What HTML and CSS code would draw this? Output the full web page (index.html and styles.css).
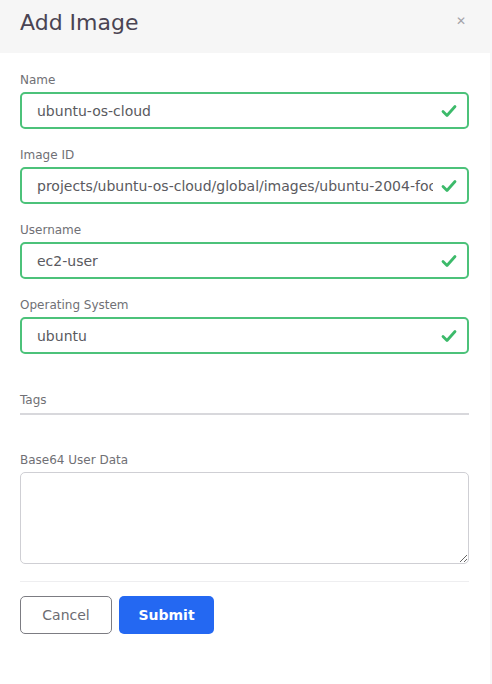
FILE: index.html
```html
<!DOCTYPE html>
<html>
<head>
<meta charset="utf-8">
<link rel="stylesheet" href="styles.css">
</head>
<body>
<div class="modal">
  <div class="header">
    <h1 class="title">Add Image</h1>
    <span class="close">&#x2715;</span>
  </div>
  <div class="body">
    <div class="field">
      <label class="label">Name</label>
      <div class="input valid"><span class="value">ubuntu-os-cloud</span><svg class="check" width="16" height="14" viewBox="0 0 16 14"><path d="M2 7.5 L6 11.5 L14 2.5" fill="none" stroke="#3cba6a" stroke-width="2.8" stroke-linecap="round" stroke-linejoin="round"/></svg></div>
    </div>
    <div class="field">
      <label class="label">Image ID</label>
      <div class="input valid"><span class="value">projects/ubuntu-os-cloud/global/images/ubuntu-2004-focal-v20210510</span><svg class="check" width="16" height="14" viewBox="0 0 16 14"><path d="M2 7.5 L6 11.5 L14 2.5" fill="none" stroke="#3cba6a" stroke-width="2.8" stroke-linecap="round" stroke-linejoin="round"/></svg></div>
    </div>
    <div class="field">
      <label class="label">Username</label>
      <div class="input valid"><span class="value">ec2-user</span><svg class="check" width="16" height="14" viewBox="0 0 16 14"><path d="M2 7.5 L6 11.5 L14 2.5" fill="none" stroke="#3cba6a" stroke-width="2.8" stroke-linecap="round" stroke-linejoin="round"/></svg></div>
    </div>
    <div class="field">
      <label class="label">Operating System</label>
      <div class="input valid"><span class="value">ubuntu</span><svg class="check" width="16" height="14" viewBox="0 0 16 14"><path d="M2 7.5 L6 11.5 L14 2.5" fill="none" stroke="#3cba6a" stroke-width="2.8" stroke-linecap="round" stroke-linejoin="round"/></svg></div>
    </div>
    <div class="tags">
      <span class="label">Tags</span>
    </div>
    <div class="field userdata">
      <label class="label">Base64 User Data</label>
      <textarea class="textarea"></textarea>
    </div>
    <div class="footer">
      <button class="btn cancel">Cancel</button>
      <button class="btn submit">Submit</button>
    </div>
  </div>
</div>
</body>
</html>
```
FILE: styles.css
```css
* { box-sizing: border-box; }
html, body { margin: 0; padding: 0; }
body {
  background: #f7f7f8;
  font-family: "DejaVu Sans", sans-serif;
  width: 492px;
  height: 684px;
  overflow: hidden;
}
.modal {
  width: 490px;
  height: 684px;
  background: #fff;
}
.header {
  height: 53px;
  background: #f6f6f6;
  display: flex;
  align-items: flex-start;
  justify-content: space-between;
  padding: 10px 24px 0 20px;
}
.title {
  margin: 0;
  font-weight: 400;
  font-size: 22px;
  color: #4a4453;
  line-height: 26px;
}
.close {
  color: #a3a3a8;
  font-size: 12px;
  line-height: 16px;
  margin-top: 3px;
}
.body {
  padding: 19px 21px 0 20px;
}
.field {
  display: flex;
  flex-direction: column;
}
.label {
  font-size: 12px;
  color: #707075;
  line-height: 16px;
  margin-bottom: 4px;
}
.input {
  height: 37px;
  border: 2px solid #4cc27a;
  border-radius: 5px;
  display: flex;
  align-items: center;
  padding: 0 10px 0 15px;
  margin-bottom: 18px;
}
.value {
  flex: 1;
  font-size: 14px;
  color: #5a5a60;
  white-space: nowrap;
  overflow: hidden;
  min-width: 0;
}
.check { flex: none; margin-left: 8px; }
.tags {
  margin-top: 20px;
  padding-bottom: 5px;
  border-bottom: 2px solid #d8d8dc;
}
.tags .label { margin: 0; display: block; }
.userdata { margin-top: 37px; }
.textarea {
  height: 92px;
  border: 1px solid #cfcfd4;
  border-radius: 5px;
  resize: vertical;
  display: block;
  width: 100%;
}
.footer {
  margin-top: 17px;
  border-top: 1px solid #eeeef0;
  padding-top: 14px;
  display: flex;
  gap: 7px;
}
.btn {
  height: 38px;
  border-radius: 5px;
  font-family: inherit;
  font-size: 14px;
  cursor: pointer;
}
.cancel {
  width: 92px;
  background: #fff;
  border: 1px solid #7c7c82;
  color: #6c6c72;
}
.submit {
  width: 95px;
  background: #2468f2;
  border: none;
  color: #fff;
  font-weight: 600;
}
```
